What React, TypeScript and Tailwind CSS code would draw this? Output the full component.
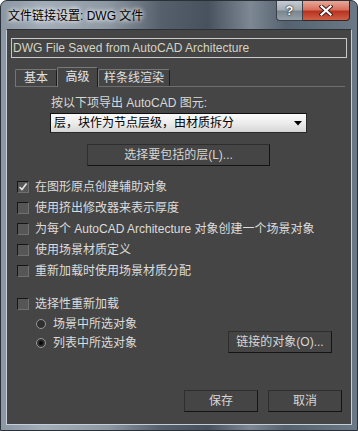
import React from "react";

const FONT = '"Liberation Sans", "Noto Sans CJK SC", sans-serif';

function CheckBox({ checked = false }: { checked?: boolean }) {
  return (
    <span className="relative flex h-[12px] w-[12px] shrink-0 items-center justify-center border border-l-[#161616] border-t-[#161616] border-r-[#707070] border-b-[#707070] bg-[#565656]">
      {checked && (
        <svg width="10" height="10" viewBox="0 0 10 10">
          <path d="M1.5 5 L4 7.5 L8.5 1.5" stroke="#e6e6e6" strokeWidth="1.6" fill="none" />
        </svg>
      )}
    </span>
  );
}

function Radio({ checked = false }: { checked?: boolean }) {
  return (
    <span className="flex h-[10px] w-[10px] shrink-0 items-center justify-center rounded-full border border-[#9a9a9a] bg-[#303030]">
      {checked && <span className="h-[4px] w-[4px] rounded-full bg-[#0a0a0a]" />}
    </span>
  );
}

function Btn({ children, className = "" }: { children: React.ReactNode; className?: string }) {
  return (
    <div
      className={
        "flex h-[22px] items-center justify-center border border-l-[#2e2e2e] border-t-[#2e2e2e] border-r-[#141414] border-b-[#141414] bg-[#454545] text-[12px] text-[#d6d6d6] " +
        className
      }
    >
      {children}
    </div>
  );
}

export default function App() {
  const rows = [
    { t: "在图形原点创建辅助对象", c: true },
    { t: "使用挤出修改器来表示厚度", c: false },
    { t: "为每个 AutoCAD Architecture 对象创建一个场景对象", c: false },
    { t: "使用场景材质定义", c: false },
    { t: "重新加载时使用场景材质分配", c: false },
  ];
  return (
    <div
      className="flex h-[431px] w-[358px] flex-col overflow-hidden rounded-t-[7px] border border-[#2a3038] bg-[linear-gradient(90deg,#8a96a2_0%,#a3adb8_12%,#8e98a3_30%,#56606c_45%,#48525e_58%,#7d8894_70%,#55626f_80%,#6b7886_100%)]"
      style={{ fontFamily: FONT }}
    >
      {/* title bar */}
      <div className="flex h-[28px] shrink-0 items-start">
        <div className="pl-[7px] pt-[7px] text-[12px] leading-[16px] text-black [text-shadow:0_0_4px_#ffffff,0_0_6px_#ffffff]">
          文件链接设置: DWG 文件
        </div>
        <div className="ml-auto mr-[7px] flex">
          <div className="flex h-[20px] w-[27px] items-center justify-center rounded-bl-[4px] border border-t-0 border-[#3a4048] bg-[linear-gradient(180deg,#c6ccd2_0%,#a6aeb6_45%,#7c8690_55%,#96a0a8_100%)]">
            <span className="text-[13px] font-bold leading-none text-white [text-shadow:0_0_1px_#000,0_0_2px_#222]">?</span>
          </div>
          <div className="flex h-[20px] w-[47px] items-center justify-center rounded-br-[4px] border border-l-0 border-t-0 border-[#3a2420] bg-[linear-gradient(180deg,#e8a898_0%,#d87060_45%,#b83420_55%,#d06048_100%)]">
            <svg width="14" height="11" viewBox="0 0 14 11">
              <path d="M2.5 1.5 L11.5 9.5 M11.5 1.5 L2.5 9.5" stroke="#3a1a14" strokeWidth="4" strokeLinecap="square" />
              <path d="M2.5 1.5 L11.5 9.5 M11.5 1.5 L2.5 9.5" stroke="#ffffff" strokeWidth="2.2" strokeLinecap="square" />
            </svg>
          </div>
        </div>
      </div>

      {/* client */}
      <div className="mx-[5px] mb-[5px] flex flex-1 flex-col border border-l-[#c4ced8] border-r-[#c4ced8] border-b-[#c4ced8] border-t-[#2c3138] bg-[#454545] pt-[8px] text-[12px] text-[#dcdcdc]">
        {/* file field */}
        <div className="ml-[4px] flex h-[20px] w-[336px] items-center border border-[#c8c8c8] pl-[1px] text-[12px] text-[#d6d4c4]">
          DWG File Saved from AutoCAD Architecture
        </div>

        {/* tabs */}
        <div className="ml-[8px] mt-[10px] flex h-[19px] w-[330px] items-end border-b border-[#6e6e6e]">
          <div className="flex h-[17px] w-[42px] items-center justify-center rounded-t-[2px] border border-b-0 border-l-[#767676] border-t-[#767676] border-r-[#1c1c1c] leading-none text-[#e0e0e0]">
            基本
          </div>
          <div className="-mb-px flex h-[20px] w-[41px] items-center justify-center rounded-t-[2px] border border-b-0 border-l-[#7a7a7a] border-t-[#7a7a7a] border-r-[#1c1c1c] bg-[#454545] pb-[1px] leading-none text-[#e6e6e6]">
            高级
          </div>
          <div className="flex h-[17px] w-[72px] items-center justify-center rounded-t-[2px] border border-b-0 border-l-[#767676] border-t-[#767676] border-r-[#1c1c1c] leading-none text-[#e0e0e0]">
            样条线渲染
          </div>
        </div>

        {/* export label */}
        <div className="ml-[44px] mt-[9px] h-[14px] leading-[14px] text-[#d8d8d8]">
          按以下项导出 AutoCAD 图元:
        </div>
        <div className="ml-[43px] mt-[3px] flex h-[20px] w-[257px] items-center border border-l-[#101010] border-t-[#101010] border-r-[#2a2a2a] border-b-[#2a2a2a] bg-[linear-gradient(180deg,#fafafa_0%,#ececec_50%,#d6d6d6_100%)] pl-[3px] pr-[4px] text-black">
          <span className="leading-none">层，块作为节点层级，由材质拆分</span>
          <svg className="ml-auto" width="8" height="5" viewBox="0 0 8 5">
            <path d="M0 0 H8 L4 4.5 Z" fill="#000" />
          </svg>
        </div>

        <Btn className="ml-[80px] mt-[11px] w-[183px]">选择要包括的层(L)...</Btn>

        {/* checkboxes */}
        <div className="mt-[10px] flex flex-col">
          {rows.map((r) => (
            <div key={r.t} className="flex h-[21px] items-center pl-[10px]">
              <CheckBox checked={r.c} />
              <span className="ml-[6px] leading-none">{r.t}</span>
            </div>
          ))}
        </div>

        <div className="mt-[12px] flex h-[21px] items-center pl-[10px]">
          <CheckBox />
          <span className="ml-[6px] leading-none">选择性重新加载</span>
        </div>

        <div className="flex">
          <div className="flex flex-col pl-[29px]">
            <div className="flex h-[19px] items-center">
              <Radio />
              <span className="ml-[7px] leading-none">场景中所选对象</span>
            </div>
            <div className="flex h-[19px] items-center">
              <Radio checked />
              <span className="ml-[7px] leading-none">列表中所选对象</span>
            </div>
          </div>
          <Btn className="ml-auto mr-[19px] mt-[17px] w-[104px]">链接的对象(O)...</Btn>
        </div>

        <div className="mt-[37px] flex justify-end gap-[10px] pr-[9px]">
          <Btn className="w-[74px]">保存</Btn>
          <Btn className="w-[74px]">取消</Btn>
        </div>
      </div>
    </div>
  );
}
